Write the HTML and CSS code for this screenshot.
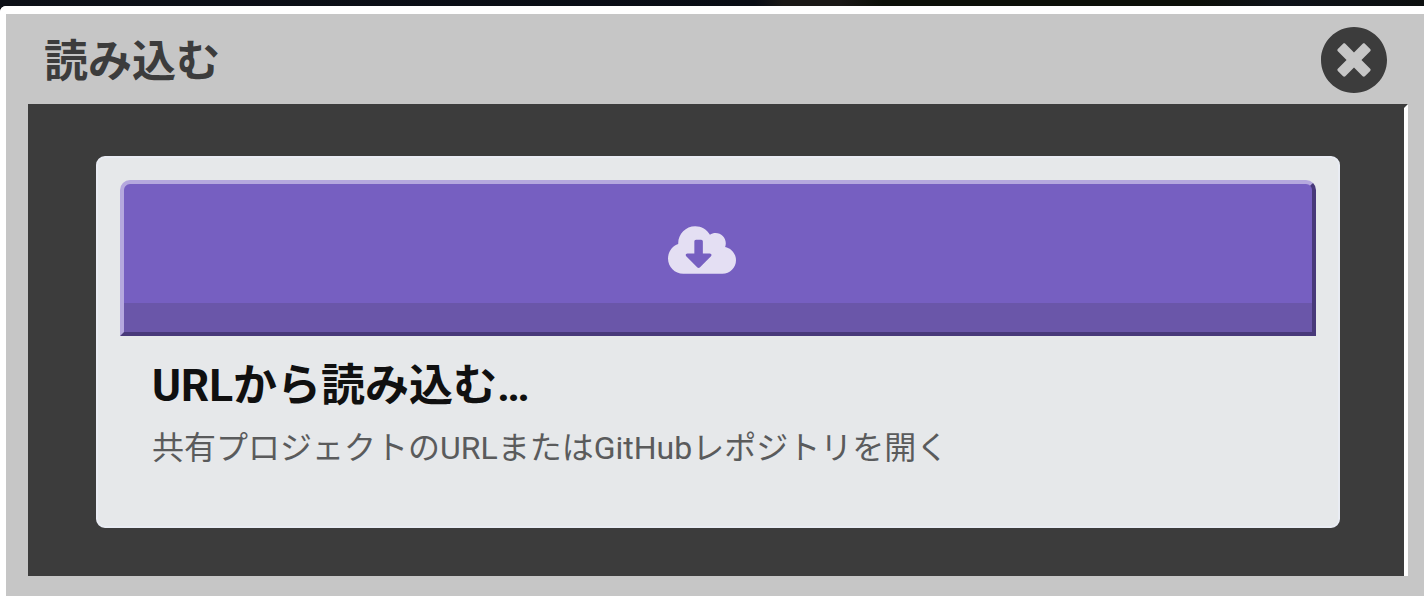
FILE: index.html
```html
<!DOCTYPE html>
<html lang="ja">
<head>
    <meta charset="UTF-8">
    <meta name="viewport" content="width=device-width, initial-scale=1.0">
    <title>読み込む</title>
    <link rel="stylesheet" href="styles.css">
</head>
<body>
    <div class="modal" role="dialog" aria-labelledby="modalTitle">
        <header class="modal-header">
            <h1 class="modal-title" id="modalTitle">読み込む</h1>
            <button class="close-button" type="button" aria-label="閉じる">
                <svg class="close-icon" viewBox="8 8 496 496" aria-hidden="true">
                    <path d="M256 8C119 8 8 119 8 256s111 248 248 248 248-111 248-248S393 8 256 8zm121.6 313.1c4.7 4.7 4.7 12.3 0 17L338 377.6c-4.7 4.7-12.3 4.7-17 0L256 312l-65.1 65.6c-4.7 4.7-12.3 4.7-17 0L134.4 338c-4.7-4.7-4.7-12.3 0-17l65.6-65-65.6-65.1c-4.7-4.7-4.7-12.3 0-17l39.6-39.6c4.7-4.7 12.3-4.7 17 0l65 65.7 65.1-65.6c4.7-4.7 12.3-4.7 17 0l39.6 39.6c4.7 4.7 4.7 12.3 0 17L312 256l65.6 65.1z"/>
                </svg>
            </button>
        </header>

        <main class="modal-content">
            <div class="card">
                <button class="card-button" type="button" aria-labelledby="cardTitle">
                    <svg class="cloud-icon" viewBox="0 32 640 448" aria-hidden="true">
                        <path d="M537.6 226.6c4.1-10.7 6.4-22.4 6.4-34.6 0-53-43-96-96-96-19.7 0-38.1 6-53.3 16.2C367 64.2 315.3 32 256 32c-88.4 0-160 71.6-160 160 0 2.7.1 5.4.2 8.1C40.2 219.8 0 273.2 0 336c0 79.5 64.5 144 144 144h368c70.7 0 128-57.3 128-128 0-61.9-44-113.6-102.4-125.4zm-132.9 88.7L299.3 420.7c-6.2 6.2-16.4 6.2-22.6 0L171.3 315.3c-10.1-10.1-2.9-27.3 11.3-27.3H248V176c0-8.8 7.2-16 16-16h48c8.8 0 16 7.2 16 16v112h65.4c14.2 0 21.4 17.2 11.3 27.3z"/>
                    </svg>
                </button>
                <div class="card-text">
                    <h2 class="card-title" id="cardTitle">URLから読み込む…</h2>
                    <p class="card-description">共有プロジェクトのURLまたはGitHubレポジトリを開く</p>
                </div>
            </div>
        </main>
    </div>
</body>
</html>
```

FILE: styles.css
```css
* {
    box-sizing: border-box;
}

body {
    margin: 0;
    padding-top: 6px;
    min-height: 100vh;
    display: flex;
    flex-direction: column;
    background: linear-gradient(90deg, #0d1017, #080c14 53%, #1a1816 55%, #1a1816 59%, #0c0f08 62%, #0c0f08 84%, #0e1219 90%, #0c0f0f);
    font-family: Roboto, "Noto Sans CJK JP", sans-serif;
}

.modal {
    flex: 1;
    padding: 0 16px 20px 22px;
    background: #c6c6c6;
    border-top: 8px solid #fff;
    border-left: 6px solid #fff;
    border-top-left-radius: 6px;
}

.modal-header {
    display: flex;
    align-items: center;
    justify-content: space-between;
    height: 90px;
    padding: 2px 21px 0 16px;
}

.modal-title {
    margin: 0;
    padding-top: 4px;
    font-size: 44px;
    line-height: 56px;
    font-weight: 700;
    color: #3c3c3c;
}

.close-button {
    padding: 0;
    border: none;
    background: none;
    cursor: pointer;
}

.close-icon {
    display: block;
    width: 66px;
    height: 66px;
    fill: #3c3c3c;
}

.modal-content {
    padding: 48px 64px;
    background: #3c3c3c;
    border: 4px solid #3c3c3c;
    border-right-color: #fff;
    border-bottom: none;
}

.card {
    padding: 22px 22px 56px;
    background: #e6e8ea;
    border: 2px solid #e9ecf3;
    border-radius: 9px;
}

.card-button {
    display: flex;
    align-items: center;
    justify-content: center;
    width: 100%;
    height: 156px;
    padding: 0 32px 16px 0;
    background: linear-gradient(to top, #6a56a9 29px, #765fc1 29px);
    border: 4px solid;
    border-color: #b5a8de #48397a #48397a #b5a8de;
    border-radius: 10px 10px 0 0;
    cursor: pointer;
}

.cloud-icon {
    width: 68px;
    height: 48px;
    fill: #e4dff3;
}

.card-text {
    padding: 22px 32px 0;
}

.card-title {
    margin: 0;
    font-size: 44px;
    line-height: 56px;
    font-weight: 700;
    color: #101010;
}

.card-description {
    margin: 0;
    padding-top: 12px;
    font-size: 32px;
    line-height: 44px;
    color: #5a5b5c;
}
```
